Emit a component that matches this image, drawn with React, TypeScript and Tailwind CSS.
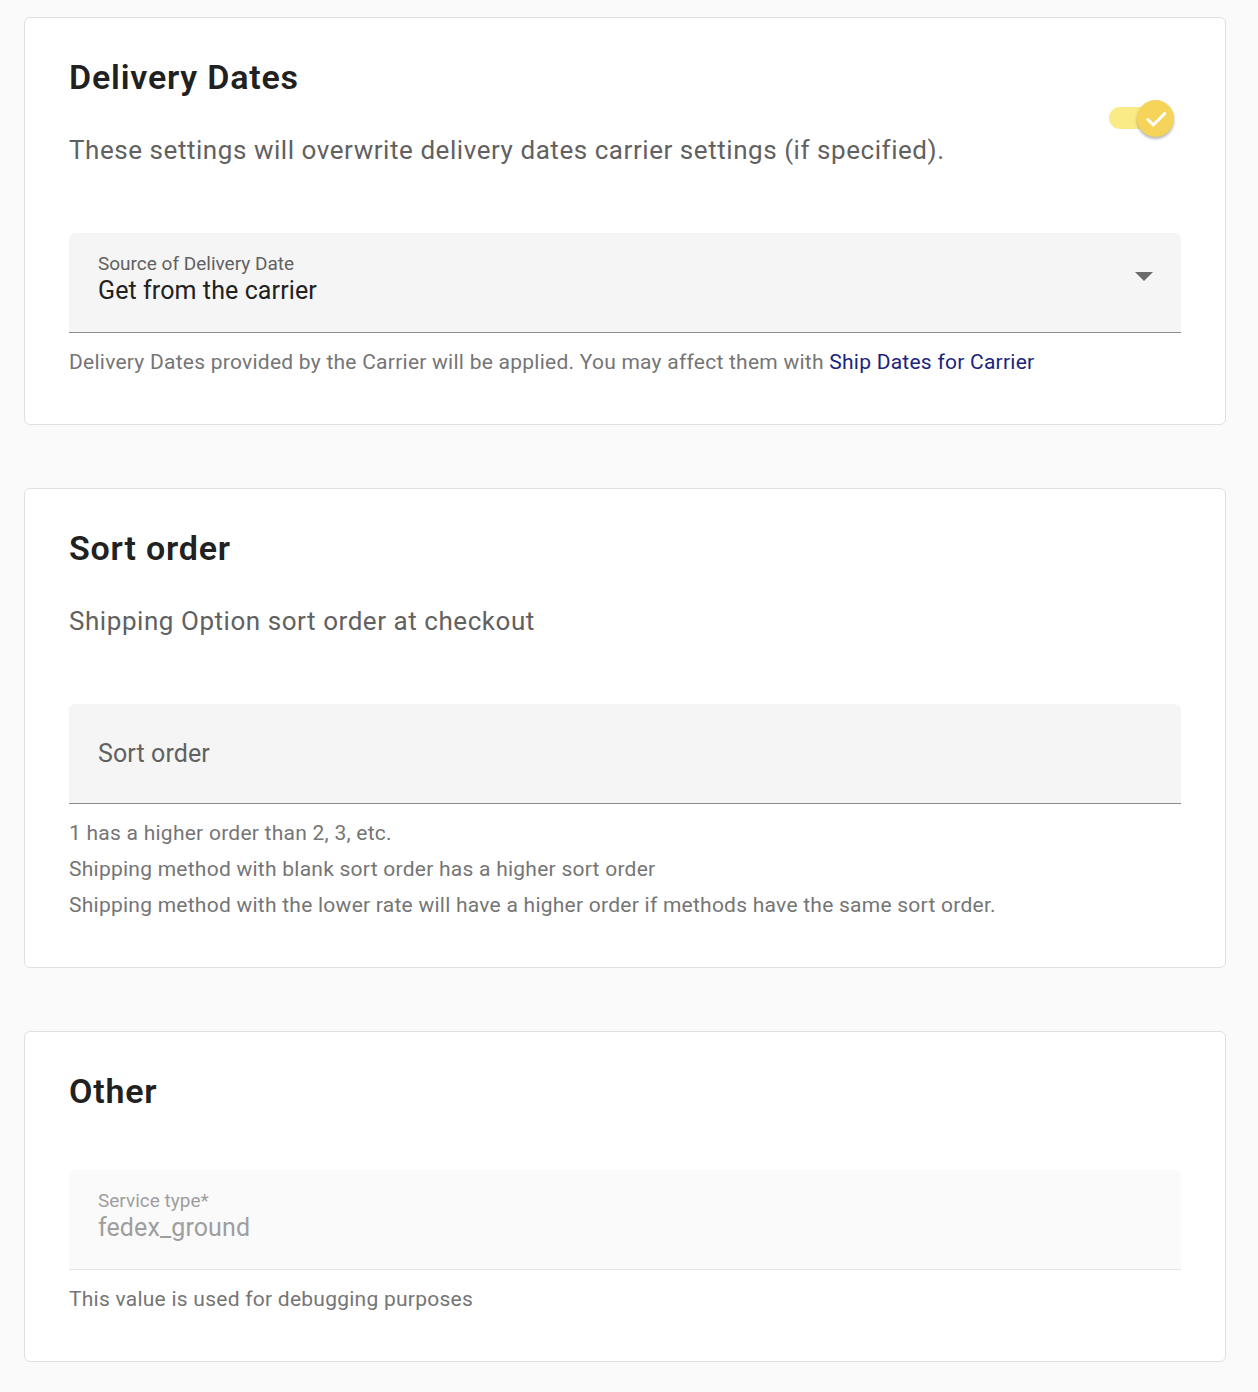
import React from "react";

function Toggle() {
  return (
    <div className="relative mt-[43px] mr-[7px] h-[37px] w-[65px] shrink-0">
      <div className="absolute left-0 top-[7px] h-[22px] w-[50px] rounded-full bg-[#fbeb86]" />
      <div className="absolute right-0 top-0 flex h-[37px] w-[37px] items-center justify-center rounded-full bg-[#f5d459] shadow-[0_2px_3px_rgba(0,0,0,0.3)]">
        <svg width="26" height="26" viewBox="0 0 24 24" fill="none">
          <path d="M4.5 12.5l5 5L20 7" stroke="#ffffff" strokeWidth="2.8" strokeLinecap="round" strokeLinejoin="round" />
        </svg>
      </div>
    </div>
  );
}

function Card({ children }: { children: React.ReactNode }) {
  return (
    <div className="rounded-[6px] border border-[#e0e0e0] bg-white px-[44px] pb-[44px] pt-[39px]">
      {children}
    </div>
  );
}

function Title({ children }: { children: React.ReactNode }) {
  return <h2 className="text-[34px] font-semibold leading-[40px] tracking-[0.8px] text-[#212121]">{children}</h2>;
}

function Subtitle({ children }: { children: React.ReactNode }) {
  return <p className="mt-[37px] text-[26px] leading-[32px] tracking-[0.55px] text-[#616161]">{children}</p>;
}

function Helper({ children }: { children: React.ReactNode }) {
  return <p className="text-[21px] leading-[36px] tracking-[0.25px] text-[#757575]">{children}</p>;
}

export default function App() {
  return (
    <div className="min-h-screen bg-[#fafafa] px-[24px] pt-[17px] pb-[30px] font-['Roboto',sans-serif]">
      <div className="flex flex-col gap-[63px] w-[1202px]">
        <Card>
          <div className="flex items-start justify-between">
            <div>
              <Title>Delivery Dates</Title>
              <Subtitle>These settings will overwrite delivery dates carrier settings (if specified).</Subtitle>
            </div>
            <Toggle />
          </div>
          <div className="mt-[67px] relative h-[100px] rounded-t-[6px] border-b border-[#8c8c8c] bg-[#f5f5f5] pl-[29px]">
            <div className="pt-[20px] text-[19px] leading-[22px] text-[#616161]">Source of Delivery Date</div>
            <div className="text-[25px] leading-[32px] tracking-[0.1px] text-[#212121]">Get from the carrier</div>
            <svg className="absolute right-[28px] top-[39px]" width="18" height="10" viewBox="0 0 18 10">
              <path d="M0 0h18L9 9z" fill="#6b6b6b" />
            </svg>
          </div>
          <div className="mt-[11px]">
            <Helper>
              Delivery Dates provided by the Carrier will be applied. You may affect them with{" "}
              <span className="text-[#1a237e]">Ship Dates for Carrier</span>
            </Helper>
          </div>
        </Card>

        <Card>
          <Title>Sort order</Title>
          <Subtitle>Shipping Option sort order at checkout</Subtitle>
          <div className="mt-[67px] flex h-[100px] items-center rounded-t-[6px] border-b border-[#8c8c8c] bg-[#f5f5f5] pl-[29px]">
            <div className="text-[25px] leading-[32px] tracking-[0.1px] text-[#616161]">Sort order</div>
          </div>
          <div className="mt-[11px]">
            <Helper>1 has a higher order than 2, 3, etc.</Helper>
            <Helper>Shipping method with blank sort order has a higher sort order</Helper>
            <Helper>Shipping method with the lower rate will have a higher order if methods have the same sort order.</Helper>
          </div>
        </Card>

        <Card>
          <Title>Other</Title>
          <div className="mt-[59px] h-[100px] rounded-t-[6px] border-b border-[#e6e6e6] bg-[#fafafa] pl-[29px]">
            <div className="pt-[20px] text-[19px] leading-[22px] text-[#9e9e9e]">Service type*</div>
            <div className="text-[25px] leading-[32px] tracking-[0.1px] text-[#9e9e9e]">fedex_ground</div>
          </div>
          <div className="mt-[11px]">
            <Helper>This value is used for debugging purposes</Helper>
          </div>
        </Card>
      </div>
    </div>
  );
}
